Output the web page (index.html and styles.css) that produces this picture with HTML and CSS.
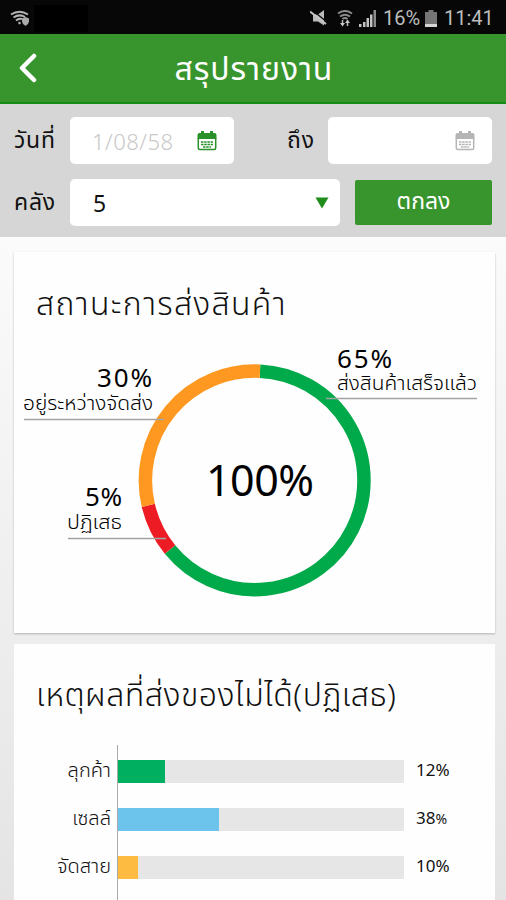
FILE: index.html
```
<!DOCTYPE html>
<html lang="th">
<head>
  <meta charset="UTF-8">
  <title>สรุปรายงาน</title>
  <link rel="stylesheet" href="styles.css">
</head>
<body>

  <div class="status-bar">
    <svg class="wifi-secure" width="20" height="17" viewBox="0 0 20 17">
      <path d="M1 4.500Q9.500-1 18 4.500M3.500 7.500Q9.500 3.500 15 7M6 10.500Q9 8 12 9M8.500 13.500l2-1" fill="none" stroke="#b5b5b5" stroke-width="2"/>
      <path d="M12 8.500l3.500-1.500 3.500 1.500v3q-.5 3-3.500 4.500-3-1.500-3.500-4.500z" fill="#aaa"/>
    </svg>
    <div class="notice"></div>
    <svg class="mute" width="18" height="16" viewBox="0 0 18 16">
      <path d="M3 4.500h5l6-4.500v15.500l-6-4H3z" fill="#bbb"/>
      <path d="M2 0l15 12" stroke="#070707" stroke-width="1.200"/>
      <path d="M0 1.500l16 12.500" stroke="#c4c4c4" stroke-width="2"/>
    </svg>
    <svg class="wifi" width="16" height="17" viewBox="0 0 16 17">
      <path d="M1 3.500Q8-1.500 15 3.500M3 6.500Q8 3 13 6.500M5.500 9Q8 7 10.500 9" fill="none" stroke="#8c8c8c" stroke-width="2"/>
      <path d="M5.500 10v4M10.500 16v-4" stroke="#bbb" stroke-width="1.500"/>
      <path d="M3 13h5l-2.500 3.500zM8 13l2.500-3.500L13 13z" fill="#c8c8c8"/>
    </svg>
    <svg class="signal" width="18" height="17" viewBox="0 0 18 17">
      <path d="M0 14h2.500v3H0zM4 12h2.500v5H4zM7.500 8H10v9H7.500zM11 4.500h2.500V17H11z" fill="#c2c2c2"/>
      <path d="M14.500 0H17v17h-2.500z" fill="#8b8b8b"/>
    </svg>
    <span class="battery-text">16%</span>
    <svg class="battery" width="12" height="17" viewBox="0 0 12 17">
      <path d="M3.500 0h5v2H12v15H0V2h3.500z" fill="#757575"/>
      <path d="M0 14h12v3H0z" fill="#d6d6d6"/>
    </svg>
    <span class="clock">11:41</span>
  </div>

  <div class="header">
    <svg class="back" width="22" height="30" viewBox="0 0 22 30">
      <path d="M17 3L5 15l12 12" fill="none" stroke="#fff" stroke-width="4.500" stroke-linecap="round" stroke-linejoin="round"/>
    </svg>
    <h1>สรุปรายงาน</h1>
  </div>

  <div class="filters">
    <div class="filter-row">
      <label class="label-from">วันที่</label>
      <div class="field date">
        <span class="date-value">1/08/58</span>
        <svg class="calendar green" width="20" height="20" viewBox="0 0 20 20">
          <path class="frame" d="M1.300 7v10q0 1.500 1.500 1.500h14.400q1.500 0 1.500-1.500V7"/>
          <path class="top" d="M.5 8V4q0-2 2-2H4V0h3v2h6V0h3v2h1.500q2 0 2 2v4z"/>
          <path class="days" d="M4 11h12M4 13.500h12M6 16h8"/>
        </svg>
      </div>
      <label class="label-to">ถึง</label>
      <div class="field date">
        <span class="date-value"></span>
        <svg class="calendar grey" width="20" height="20" viewBox="0 0 20 20">
          <path class="frame" d="M1.300 7v10q0 1.500 1.500 1.500h14.400q1.500 0 1.500-1.500V7"/>
          <path class="top" d="M.5 8V4q0-2 2-2H4V0h3v2h6V0h3v2h1.500q2 0 2 2v4z"/>
          <path class="days" d="M4 11h12M4 13.500h12M6 16h8"/>
        </svg>
      </div>
    </div>
    <div class="filter-row">
      <label class="label-from">คลัง</label>
      <div class="field select">
        <span>5</span>
        <svg width="14" height="12" viewBox="0 0 14 12"><path d="M.5.500h13L7 11.500z" fill="#1f8c1c"/></svg>
      </div>
      <button type="button">ตกลง</button>
    </div>
  </div>

  <div class="content">
    <div class="card status-card">
      <h2 class="status-title">สถานะการส่งสินค้า</h2>
      <svg class="donut" width="481" height="270" viewBox="0 0 481 270">
        <g fill="none" stroke-width="13.500">
          <path d="M246 31.200A109.300 109.300 0 1 1 156 209.500" stroke="#00aa4b"/>
          <path d="M156 209.500A109.300 109.300 0 0 1 134.300 165.400" stroke="#ed1c24"/>
          <path d="M134.300 165.400A109.300 109.300 0 0 1 246 31.200" stroke="#ff9820"/>
        </g>
        <path d="M10 79.500h140M312 58.500h151M54 198.500h98" stroke="#a3a3a3" stroke-width="1.500"/>
        <text class="total" x="192" y="156" textLength="108">100%</text>
        <text class="percent" x="83" y="47" textLength="55">30%</text>
        <text class="caption" x="9" y="70" textLength="130" lengthAdjust="spacingAndGlyphs">อยู่ระหว่างจัดส่ง</text>
        <text class="percent" x="323" y="28" textLength="55">65%</text>
        <text class="caption" x="323" y="50" textLength="140" lengthAdjust="spacingAndGlyphs">ส่งสินค้าเสร็จแล้ว</text>
        <text class="percent" x="71" y="166" textLength="37">5%</text>
        <text class="caption" x="53" y="189" textLength="55" lengthAdjust="spacingAndGlyphs">ปฏิเสธ</text>
      </svg>
    </div>

    <div class="card reason-card">
      <h2 class="reason-title">เหตุผลที่ส่งของไม่ได้(ปฏิเสธ)</h2>
      <div class="chart">
        <div class="bar-row">
          <span class="bar-label">ลุกค้า</span>
          <div class="track"><div class="bar customer" style="width: 47px"></div></div>
          <span class="bar-value">12%</span>
        </div>
        <div class="bar-row">
          <span class="bar-label">เซลล์</span>
          <div class="track"><div class="bar sales" style="width: 101px"></div></div>
          <span class="bar-value">38<small>%</small></span>
        </div>
        <div class="bar-row">
          <span class="bar-label">จัดสาย</span>
          <div class="track"><div class="bar route" style="width: 20px"></div></div>
          <span class="bar-value">10%</span>
        </div>
      </div>
    </div>
  </div>

</body>
</html>
```
FILE: styles.css
```
* {
  box-sizing: border-box;
}

body {
  margin: 0;
  height: 900px;
  overflow: hidden;
  font-family: 'Noto Sans', 'Noto Sans Thai', sans-serif;
  color: #111;
  background: linear-gradient(#fbfbfb 237px, #e4e4e4 900px);
}

h1, h2 {
  margin: 0;
  font-weight: 400;
  white-space: nowrap;
}

/* Status bar */
.status-bar {
  display: flex;
  align-items: center;
  height: 34px;
  padding: 2px 11px 0 10px;
  background: #070707;
  color: #bdbdbd;
  font-family: Roboto, sans-serif;
  font-size: 20px;
}

.notice {
  width: 54px;
  height: 27px;
  margin: 0 auto 0 4px;
  background: #000;
}

.wifi {
  margin-left: 9px;
}

.signal {
  margin-left: 6px;
}

.battery-text {
  width: 38px;
  margin-left: 6px;
}

.battery {
  margin-left: 4px;
}

.clock {
  width: 51px;
  margin-left: 7px;
}

/* Header */
.header {
  display: flex;
  align-items: center;
  height: 70px;
  padding-left: 17px;
  background: #38942c;
  border-bottom: 2px solid #168c16;
  color: #fff;
}

.header h1 {
  flex: 1;
  padding: 3px 37px 0 0;
  font-size: 32px;
  letter-spacing: 0.9px;
  text-align: center;
}

/* Filters */
.filters {
  height: 133px;
  padding: 13px 14px 0 14px;
  background: #d6d6d6;
}

.filter-row {
  display: flex;
  align-items: center;
  height: 47px;
  margin-bottom: 15px;
  font-size: 23px;
}

.label-from {
  width: 56px;
  letter-spacing: 0.8px;
  white-space: nowrap;
}

.label-to {
  width: 41px;
  margin-left: 53px;
  letter-spacing: 0.8px;
}

.field {
  display: flex;
  align-items: center;
  justify-content: space-between;
  height: 47px;
  background: #fff;
  border-radius: 5px;
}

.date {
  width: 164px;
  padding: 0 17px 0 22px;
}

.date-value {
  color: #c8c8c8;
  font-size: 22px;
  font-weight: 300;
  letter-spacing: 0.5px;
}

.select {
  width: 270px;
  padding: 0 11px 0 23px;
}

.calendar .frame {
  fill: none;
  stroke-width: 1.500;
}

.calendar .days {
  stroke-width: 1.700;
  stroke-dasharray: 2.500 0.700;
}

.green {
  fill: #299127;
  stroke: #299127;
  stroke-width: 0;
}

.grey {
  fill: #b5b5b5;
  stroke: #b5b5b5;
  stroke-width: 0;
}

button {
  width: 137px;
  height: 45px;
  margin-left: 15px;
  padding: 0 0 3px;
  border: none;
  border-radius: 2px;
  background: #38942c;
  color: #fff;
  font: inherit;
}

/* Cards */
.content {
  padding: 15px 11px 0 14px;
}

.card {
  background: #fefefe;
}

.status-card {
  height: 381px;
  margin-bottom: 11px;
  box-shadow: 0 1px 2px rgba(0, 0, 0, 0.25);
}

.card h2 {
  padding-left: 22px;
  font-size: 32px;
  font-weight: 350;
  line-height: 50px;
}

.status-card h2 {
  height: 88px;
  padding-top: 26px;
  letter-spacing: 1.3px;
}

.donut {
  display: block;
}

.donut .total {
  font-size: 43px;
}

.donut .percent {
  font-size: 26px;
}

.donut .caption {
  font-size: 19px;
  font-weight: 350;
}

.reason-card {
  height: 270px;
}

.reason-card h2 {
  height: 101px;
  padding-top: 25px;
  letter-spacing: 0.5px;
}

/* Bars */
.chart {
  height: 160px;
  padding-top: 15px;
  background: linear-gradient(#aaa, #aaa) 103px 0 / 1px 100% no-repeat;
}

.bar-row {
  display: flex;
  align-items: center;
  height: 23px;
  margin-bottom: 25px;
  font-size: 17px;
}

.bar-label {
  width: 97px;
  margin-top: -4px;
  font-size: 20px;
  font-weight: 350;
  line-height: 23px;
  text-align: right;
}

.track {
  width: 286px;
  height: 23px;
  margin-left: 7px;
  background: #e6e6e6;
}

.bar {
  height: 23px;
}

.customer {
  background: #00b060;
}

.sales {
  background: #6cc3ec;
}

.route {
  background: #fdbb42;
}

.bar-value {
  margin: -4px 0 0 12px;
}

.bar-value small {
  font-size: 14px;
}
```
